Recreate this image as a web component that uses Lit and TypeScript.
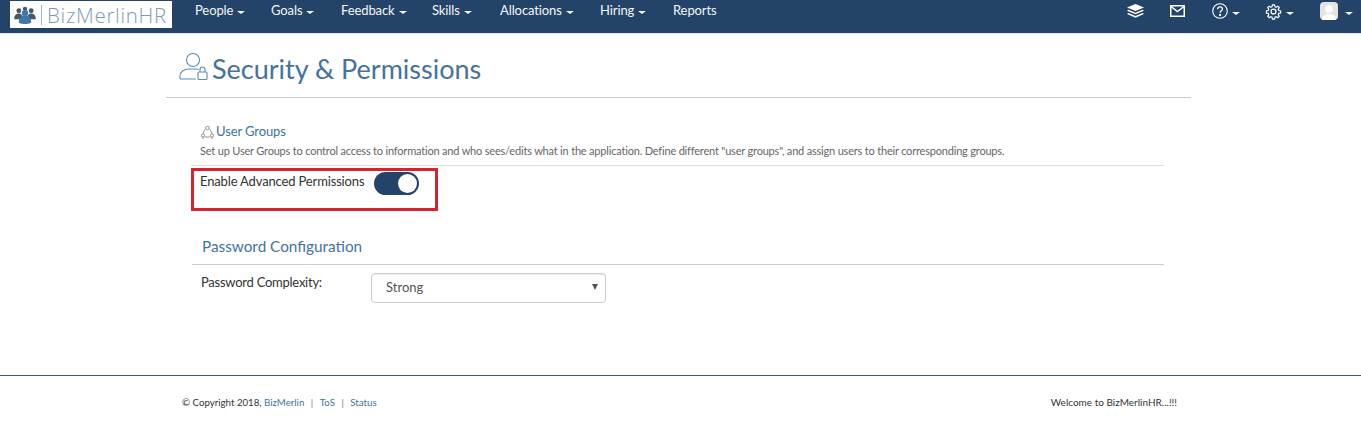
import { LitElement, html, css } from "lit";
import { customElement } from "lit/decorators.js";

const NAV = [
  ["People", true, 76], ["Goals", true, 70], ["Feedback", true, 91], ["Skills", true, 68],
  ["Allocations", true, 100], ["Hiring", true, 73], ["Reports", false, 44],
] as const;

@customElement("app-root")
export class AppRoot extends LitElement {
  static styles = css`
    :host { display: block; font-family: Lato, "Liberation Sans", sans-serif; color: #333; background: #fff; height: 421px; overflow: hidden; }
    * { box-sizing: border-box; }
    .nav { height: 33px; background: #234468; display: flex; align-items: flex-start; padding-left: 10px; box-shadow: 0 1px 0 #dfe7ef; }
    .logo { width: 162px; height: 27px; margin-top: 1px; background: #fff; display: flex; align-items: center; padding-left: 4px; }
    .logo-mark { width: 22px; height: 18px; }
    .logo-sep { width: 1px; height: 20px; background: #9db3c5; margin: 0 5px 0 5px; }
    .logo-text { font-family: "Open Sans", Lato, sans-serif; font-weight: 300; font-size: 20.500px; letter-spacing: .7px; color: #7f9bb3; }
    .menu { display: flex; margin-left: 23px; padding-top: 2px; }
    .menu a { color: #f3f6f9; font-size: 13px; line-height: 17px; display: flex; align-items: center; gap: 4px; letter-spacing: -0.1px; }
    .caret { display: inline-block; width: 0; height: 0; border-left: 4px solid transparent; border-right: 4px solid transparent; border-top: 3.500px solid #f3f6f9; margin-top: 4px; }
    .tools { margin-left: auto; display: flex; align-items: center; height: 22px; padding-right: 8px; }
    .tool { display: flex; align-items: center; gap: 4px; color: #fff; }
    .tool.user { gap: 7px; }
    .t1 { margin-right: 26px; } .t2 { margin-right: 27px; } .t3 { margin-right: 25px; } .t4 { margin-right: 26px; }
    .avatar { width: 18px; height: 18px; border-radius: 4px; background: #e4e4e4; overflow: hidden; }

    .wrap { width: 1025px; margin-left: 166px; }
    .title { height: 65px; border-bottom: 1px solid #ccc; display: flex; align-items: center; padding: 8px 0 0 12px; color: #44739f; }
    .title svg { width: 30px; height: 30px; margin-right: 4px; margin-top: -4px; }
    .title h1 { margin: 0; font-size: 27px; font-weight: 400; line-height: 32px; margin-top: -1px; }

    .section { width: 973px; margin-left: 191px; }
    .group { padding: 25px 0 7px 9px; border-bottom: 1px solid #ddd; }
    .group-link { display: flex; align-items: center; color: #44739f; font-size: 13px; line-height: 17px; letter-spacing: -0.1px; }
    .group-link svg { width: 15px; height: 14px; margin-right: 1px; }
    .group-desc { font-size: 11px; color: #666; line-height: 15px; margin-top: 3px; letter-spacing: -0.19px; }
    .enable { width: 247px; height: 43px; margin-top: 2px; border: 3px solid #d8232e; display: flex; align-items: flex-start; padding: 2px 0 0 6px; }
    .enable label { font-size: 13px; line-height: 17px; color: #333; letter-spacing: -0.15px; }
    .switch { width: 45px; height: 23px; border-radius: 12px; background: #234468; margin-left: 10px; margin-top: -1px; padding: 2px 2px 2px 0; display: flex; justify-content: flex-end; }
    .knob { width: 19px; height: 19px; border-radius: 50%; background: #fff; }

    .pw-title { margin: 26px 0 0 1px; padding: 0 0 8px 10px; border-bottom: 1px solid #ccc; font-size: 15.300px; font-weight: 400; line-height: 19px; color: #44739f; }
    .pw-row { display: flex; align-items: flex-start; padding: 8px 0 0 10px; }
    .pw-row label { font-size: 13px; line-height: 17px; width: 170px; margin-top: 1px; letter-spacing: -0.25px; }
    .select { width: 235px; height: 30px; border: 1px solid #ccc; border-radius: 4px; box-shadow: inset 0 1px 1px rgba(0,0,0,.075); display: flex; align-items: center; justify-content: space-between; padding: 0 7px 2px 14px; font-size: 13px; color: #555; }
    .arrow { width: 0; height: 0; border-left: 3px solid transparent; border-right: 3px solid transparent; border-top: 6px solid #555; }

    .footer { margin-top: 72px; border-top: 1px solid #3b5a6a; height: 46px; }
    .foot-in { width: 1009px; margin-left: 182px; display: flex; justify-content: space-between; padding-top: 20px; font-size: 9.700px; line-height: 12px; color: #333; }
    .foot-in a { color: #44739f; }
    .foot-in .bar { color: #777; margin: 0 6.500px; }
    .welcome { font-size: 10px; margin-right: 14px; }
  `;

  render() {
    return html`
      <div class="nav">
        <div class="logo">
          <svg class="logo-mark" viewBox="0 0 23 19" fill="#3f77a8">
            <circle cx="5" cy="5" r="2.600" fill="#44596e"/><circle cx="18" cy="5" r="2.600" fill="#44596e"/>
            <circle cx="11.500" cy="3" r="2.300" fill="#44596e"/>
            <path d="M0 14c0-4 2-6 5-6s4 2 4 6zM14 14c0-4 1-6 4-6s5 2 5 6z" fill="#44596e"/>
            <circle cx="11.500" cy="7.500" r="3.400"/><path d="M5 17c0-5 2.500-7 6.500-7s6.500 2 6.500 7c0 1.500-3 2-6.500 2S5 18.500 5 17z"/>
          </svg>
          <span class="logo-sep"></span>
          <span class="logo-text">BizMerlinHR</span>
        </div>
        <div class="menu">
          ${NAV.map(([n, c, w]) => html`<a style="width:${w}px">${n}${c ? html`<span class="caret"></span>` : ""}</a>`)}
        </div>
        <div class="tools">
          <span class="tool t1">
            <svg width="17" height="14" viewBox="0 0 17 14" fill="#fff"><path d="M8.500 0 17 3.500 8.500 7 0 3.500z"/><path d="M1.500 5.800 8.500 8.700 15.500 5.800 17 6.800 8.500 10.300 0 6.800z"/><path d="M1.500 9 8.500 12 15.500 9 17 10 8.500 13.700 0 10z"/></svg>
          </span>
          <span class="tool t2">
            <svg width="15" height="12" viewBox="0 0 15 12" fill="none" stroke="#fff" stroke-width="1.500"><rect x=".75" y=".75" width="13.500" height="10.500"/><path d="M1 1.500 7.500 6.500 14 1.500"/></svg>
          </span>
          <span class="tool t3">
            <svg width="16" height="16" viewBox="0 0 16 16" fill="none" stroke="#fff" stroke-width="1.100"><circle cx="8" cy="8" r="7.300"/><path d="M5.700 6.200c0-1.500 1-2.400 2.400-2.400s2.300.9 2.300 2.100c0 1.800-2.300 1.900-2.300 3.800" stroke-width="1.300"/><circle cx="8.100" cy="12" r=".6" fill="#fff"/></svg>
            <span class="caret"></span>
          </span>
          <span class="tool t4">
            <svg width="17" height="17" viewBox="0 0 24 24" fill="none" stroke="#fff" stroke-width="1.800"><circle cx="12" cy="12" r="3.500"/><path d="M10.300 1.500h3.400l.5 2.900 2.100.9 2.400-1.700 2.400 2.400-1.700 2.400.9 2.100 2.900.5v3.400l-2.900.5-.9 2.100 1.700 2.400-2.400 2.400-2.400-1.700-2.100.9-.5 2.900h-3.400l-.5-2.900-2.100-.9-2.400 1.700-2.400-2.400 1.700-2.400-.9-2.100-2.900-.5v-3.400l2.900-.5.9-2.100-1.700-2.400 2.400-2.400 2.400 1.700 2.100-.9z" transform="translate(1.200 1.200) scale(.9)"/></svg>
            <span class="caret"></span>
          </span>
          <span class="tool user">
            <span class="avatar"><svg width="18" height="18" viewBox="0 0 18 18" fill="#fff"><circle cx="9" cy="7" r="3.800"/><path d="M2 18c0-4 3-6 7-6s7 2 7 6z"/></svg></span>
            <span class="caret"></span>
          </span>
        </div>
      </div>

      <div class="wrap">
        <div class="title">
          <svg viewBox="0 0 30 30" fill="none" stroke="#5f8bb3" stroke-width="1.100">
            <circle cx="15" cy="8" r="6.500"/>
            <path d="M2 27v-3c0-4 4-7 9-7h7c1 0 1.800.2 2.500.5M2 27h16"/>
            <rect x="20" y="20" width="9" height="7.500" rx="1"/>
            <path d="M22 20v-2.500a2.500 2.500 0 0 1 5 0V20"/>
          </svg>
          <h1>Security &amp; Permissions</h1>
        </div>
      </div>

      <div class="section">
        <div class="group">
          <div class="group-link">
            <svg viewBox="0 0 15 14" fill="none" stroke="#777" stroke-width=".8"><circle cx="7.500" cy="3" r="1.800"/><circle cx="3" cy="10.500" r="1.600"/><circle cx="12" cy="10.500" r="1.600"/><path d="M5 4.500 3 8.500M10 4.500l2 4M5 12h5M2 13h2M11 13h2"/></svg>
            User Groups
          </div>
          <div class="group-desc">Set up User Groups to control access to information and who sees/edits what in the application. Define different "user groups", and assign users to their corresponding groups.</div>
        </div>
        <div class="enable">
          <label>Enable Advanced Permissions</label>
          <div class="switch"><span class="knob"></span></div>
        </div>
        <h2 class="pw-title">Password Configuration</h2>
        <div class="pw-row">
          <label>Password Complexity:</label>
          <div class="select"><span>Strong</span><span class="arrow"></span></div>
        </div>
      </div>

      <div class="footer">
        <div class="foot-in">
          <span>© Copyright 2018, <a>BizMerlin</a><span class="bar">|</span><a>ToS</a><span class="bar">|</span><a>Status</a></span>
          <span class="welcome">Welcome to BizMerlinHR...!!!</span>
        </div>
      </div>
    `;
  }
}
